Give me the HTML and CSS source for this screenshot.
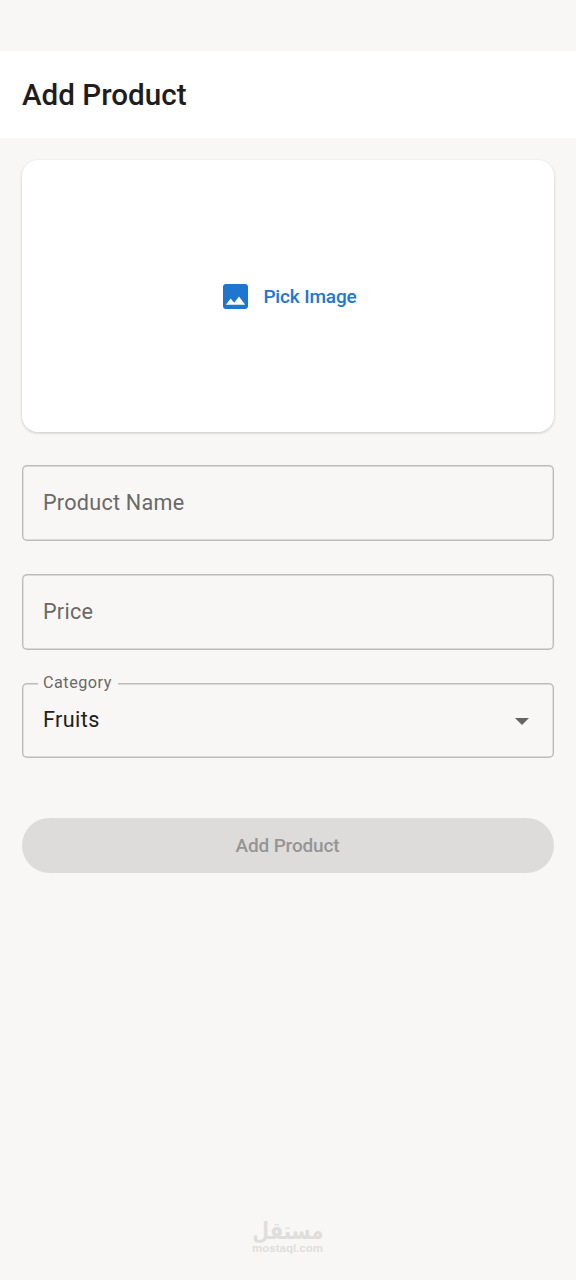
FILE: index.html
```html
<!DOCTYPE html>
<html lang="en">
<head>
<meta charset="utf-8">
<title>Add Product</title>
<link rel="stylesheet" href="styles.css">
</head>
<body>
<div class="screen">
  <header class="app-bar"><h1 class="title">Add Product</h1></header>
  <main class="form">
    <button class="picker">
      <svg class="picker-icon" viewBox="3 3 18 18"><path fill="currentColor" d="M21 19V5c0-1.100-.9-2-2-2H5c-1.100 0-2 .9-2 2v14c0 1.100.9 2 2 2h14c1.100 0 2-.9 2-2zM8.500 13.500l2.500 3.010L14.500 12l4.500 6H5l3.500-4.500z"/></svg>
      <span class="picker-label">Pick Image</span>
    </button>
    <div class="field"><span class="text">Product Name</span></div>
    <div class="field"><span class="text">Price</span></div>
    <div class="field field-select">
      <span class="caption">Category</span>
      <span class="text value">Fruits</span>
      <svg class="arrow" viewBox="0 0 14 7"><path fill="currentColor" d="M0 0h14L7 7z"/></svg>
    </div>
    <button class="submit" disabled><span class="submit-label">Add Product</span></button>
  </main>
  <footer class="brand">
    <span class="brand-ar" lang="ar" dir="rtl">مستقل</span>
    <span class="brand-en">mostaql.com</span>
  </footer>
</div>
</body>
</html>
```
FILE: styles.css
```css
* { box-sizing: border-box; }
body { margin: 0; background: #f8f7f5; font-family: Roboto, "Liberation Sans", sans-serif; }
button { border: 0; padding: 0; font: inherit; }
.screen { height: 1280px; padding-top: 51px; display: flex; flex-direction: column; overflow: hidden; }
.app-bar { height: 87px; padding: 0 22px; background: #fff; display: flex; align-items: center; }
.title { margin: 0; font-size: 29.600px; line-height: 36px; font-weight: 500; color: #1d1d20; }
.form { padding: 22px 22px 0; display: flex; flex-direction: column; }
.picker { height: 272px; margin-bottom: 33px; border-radius: 16px; background: #fff; box-shadow: 0 1px 3px rgba(0,0,0,.2); color: #1e76d0; display: flex; align-items: center; justify-content: center; gap: 15px; padding-left: 4px; }
.picker-icon { width: 25px; height: 25px; }
.picker-label { padding-top: 1px; font-size: 19px; font-weight: 500; line-height: 26px; letter-spacing: -.14px; }
.field { position: relative; height: 75.600px; margin-bottom: 33.400px; padding: 0 25px 0 21px; box-shadow: inset 0 0 0 1.400px #bcbcbb; border-radius: 5px; display: flex; align-items: center; justify-content: space-between; }
.field-select { height: 75px; margin-bottom: 34px; }
.text { font-size: 21.600px; line-height: 30px; letter-spacing: .25px; color: #6a6967; }
.value { color: #202020; letter-spacing: .4px; }
.caption { position: absolute; left: 16px; top: -12px; padding: 0 6px 0 5px; background: #f8f7f5; font-size: 16.200px; line-height: 24px; letter-spacing: .5px; color: #6a6967; }
.arrow { width: 14px; height: 7px; margin-top: 2px; color: #666563; }
.submit { height: 54.500px; margin-top: 26.500px; border-radius: 28px; background: #dddcdb; color: #969594; }
.submit-label { position: relative; top: -.5px; left: -.5px; font-size: 19px; font-weight: 500; letter-spacing: -.15px; }
.brand { margin-top: auto; height: 62px; padding: 3px 1px 0 0; display: flex; flex-direction: column; align-items: center; color: #dfdedd; }
.brand-ar { font: bold 24px/21px "DejaVu Sans", sans-serif; transform: scaleX(.81); }
.brand-en { font: bold 11.500px/12px "Liberation Sans", sans-serif; }
```
